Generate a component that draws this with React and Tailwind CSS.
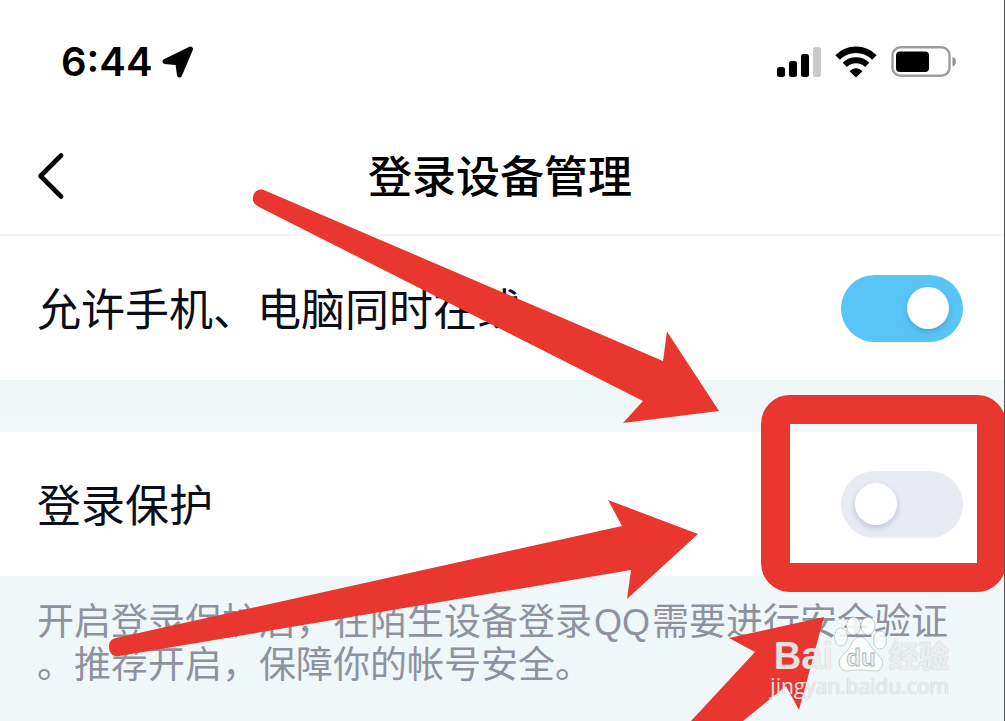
import { useState } from 'react';

function SignalIcon() {
  return (
    <svg className="w-11 h-8" viewBox="0 0 44 32" aria-hidden>
      <rect x="0" y="21" width="8" height="10" rx="2.5" />
      <rect x="12" y="15" width="8" height="16" rx="2.5" />
      <rect x="24" y="8" width="8" height="23" rx="2.5" />
      <rect x="36" y="1" width="8" height="30" rx="2.5" fill="#c9caca" />
    </svg>
  );
}

function WifiIcon() {
  return (
    <svg className="w-[42px] h-8" viewBox="0 0 42 32" aria-hidden>
      <path d="M2.6 11.4C12.8 1.2 29.2 1.2 39.4 11.4" fill="none" stroke="#000" strokeWidth="6.4" />
      <path d="M9.8 18.8C16 12.8 26 12.8 32.2 18.8" fill="none" stroke="#000" strokeWidth="6" />
      <path d="M14.6 25.2C18 21.2 24 21.2 27.4 25.2L21 31.6Z" />
    </svg>
  );
}

function BatteryIcon() {
  return (
    <svg className="w-[66px] h-8" viewBox="0 0 66 32" aria-hidden>
      <rect x="1.5" y="1.2" width="57" height="28.6" rx="8" fill="none" stroke="#9d9d9d" strokeWidth="2.4" />
      <rect x="5" y="5.5" width="33" height="20.5" rx="4" />
      <path d="M61.5 11C66 12 66 19.5 61.5 20.5Z" fill="#8e8e8e" />
    </svg>
  );
}

function StatusBar() {
  return (
    <div className="flex items-center justify-between h-[124px] pl-[61px] pr-[47px]">
      <div className="flex items-center gap-[9px]">
        <span className="font-['Inter',sans-serif] font-semibold text-[40px] leading-none">6:44</span>
        <svg className="w-8 h-8" viewBox="0 0 32 32" aria-hidden>
          <path
            d="M3 15.5L28.5 3L17.5 29L15.8 16.8Z"
            stroke="#000"
            strokeWidth="5"
            strokeLinejoin="round"
          />
        </svg>
      </div>
      <div className="flex items-center gap-[14px]">
        <SignalIcon />
        <WifiIcon />
        <BatteryIcon />
      </div>
    </div>
  );
}

function SwitchRow({ id, label, checked, onChange }) {
  return (
    <div className="flex items-center justify-between h-36 pl-[37px] pr-[41px] bg-white">
      <label htmlFor={id} className="pb-0.5 text-[44px] leading-none text-[#0b0d18]">
        {label}
      </label>
      <input
        id={id}
        type="checkbox"
        role="switch"
        checked={checked}
        onChange={(e) => onChange(e.target.checked)}
        className="appearance-none flex items-center w-[122px] h-[67px] px-[14px] rounded-full cursor-pointer bg-[#e9ebf4] checked:bg-[#59c5f7] checked:justify-end before:content-[''] before:w-[42px] before:h-[42px] before:rounded-full before:bg-white before:shadow-[0_3px_6px_rgba(40,60,90,0.22)]"
      />
    </div>
  );
}

function Watermark() {
  return (
    <div className="absolute right-[55px] bottom-[21px] flex flex-col items-end text-white/80 [text-shadow:0_0_1px_rgba(100,110,120,0.6)]">
      <div className="flex items-end h-14">
        <span className="font-['Liberation_Sans',sans-serif] font-bold text-[38px] leading-8">Bai</span>
        <svg className="w-[56px] h-14" viewBox="0 0 56 56" aria-label="du">
          <g fill="#fff" fillOpacity="0.85" stroke="#8f989e" strokeOpacity="0.5" strokeWidth="0.9">
            <ellipse cx="8" cy="21" rx="6.5" ry="9" />
            <ellipse cx="20.5" cy="10" rx="7" ry="9" />
            <ellipse cx="35" cy="10" rx="7" ry="9" />
            <ellipse cx="47" cy="24" rx="6.5" ry="9" />
            <path d="M27 21C34 21 36 29 42 36C48 41 52 46 48 52C45 57 37 54 27 54C17 54 11 57 8 52C4 46 7 41 13 36C19 29 20 21 27 21Z" />
          </g>
          <text
            x="28"
            y="50"
            textAnchor="middle"
            fill="#eef3f4"
            stroke="#a9b1b6"
            strokeWidth="0.8"
            className="font-['Liberation_Sans',sans-serif] font-bold text-2xl [text-shadow:none]"
          >
            du
          </text>
        </svg>
        <span className="font-['Noto_Sans_CJK_SC',sans-serif] font-black text-[30px] leading-9">经验</span>
      </div>
      <span className="font-['Open_Sans',sans-serif] font-medium text-[21px] leading-7">jingyan.baidu.com</span>
    </div>
  );
}

function Annotations() {
  return (
    <svg
      className="absolute top-0 left-0 w-full pointer-events-none"
      viewBox="0 0 1004 721"
      fill="#e93730"
      aria-hidden
    >
      <path d="M265 190.5L663 361L667 331.5L719 411L623 423L643 401L263 209C256 206 252 203 253 197C254 191 259 188 265 190.5Z" />
      <path d="M116 638L622 526L608 500L698 534L627 599L631 570L119 656C113 657 109 653 109 647C109 642 111 639 116 638Z" />
      <path d="M691 721L755 652L729 638L824 617L799 710L786 686L743 721Z" />
      <rect x="775.5" y="409.5" width="216" height="168" rx="14.5" fill="none" stroke="#e93730" strokeWidth="29" />
    </svg>
  );
}

export default function App() {
  const [multiOnline, setMultiOnline] = useState(true);
  const [loginProtect, setLoginProtect] = useState(false);

  return (
    <div className="relative flex flex-col min-h-screen overflow-hidden bg-[#f0f7f8] border-r border-[#55585b] font-['Noto_Sans_CJK_SC',sans-serif] text-black">
      <header className="bg-white border-b-2 border-[#f4f5f5]">
        <StatusBar />
        <div className="grid grid-cols-[1fr_auto_1fr] items-center h-[110px] pb-1.5 pl-9 pr-10">
          <button type="button" aria-label="返回" className="justify-self-start">
            <svg className="w-8 h-12" viewBox="0 0 32 48" fill="none" aria-hidden>
              <path d="M25 3.5L4.5 24L25 44.5" stroke="#000" strokeWidth="4.6" strokeLinecap="round" strokeLinejoin="round" />
            </svg>
          </button>
          <h1 className="pb-1 font-medium text-[44px] leading-none">登录设备管理</h1>
        </div>
      </header>

      <main className="flex flex-col">
        <SwitchRow
          id="multi-online"
          label="允许手机、电脑同时在线"
          checked={multiOnline}
          onChange={setMultiOnline}
        />
        <div className="h-[52px] bg-gradient-to-b from-[#eff7f6] to-[#f3f7fb]" />
        <SwitchRow
          id="login-protect"
          label="登录保护"
          checked={loginProtect}
          onChange={setLoginProtect}
        />
        <p className="pt-[22px] pl-[37px] text-[37px] leading-[43px] text-[#8f929e] whitespace-nowrap">
          开启登录保护后，在陌生设备登录
          <span className="px-0.5 font-['Liberation_Sans',sans-serif] text-4xl leading-none">QQ</span>
          需要进行安全验证
          <br />
          。推荐开启，保障你的帐号安全。
        </p>
      </main>

      <Annotations />
      <Watermark />
    </div>
  );
}
